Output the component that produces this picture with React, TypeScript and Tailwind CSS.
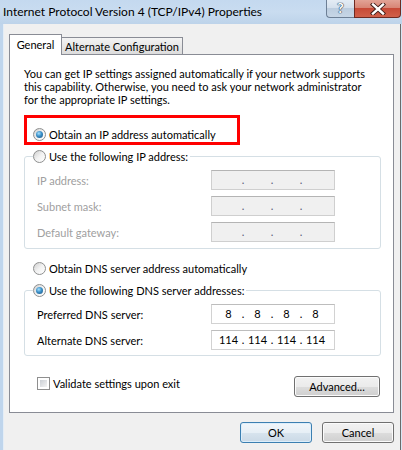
import React from "react";

const font = "font-['Lato','Liberation_Sans',Arial,sans-serif] text-[11px]";

function Radio({ checked }: { checked?: boolean }) {
  return (
    <span className="flex h-[13px] w-[13px] shrink-0 items-center justify-center rounded-full border border-[#8e8f8f] bg-linear-to-br from-[#cfcfcf] via-[#f2f2f2] to-white">
      {checked && (
        <span className="h-[7px] w-[7px] rounded-full bg-[radial-gradient(circle_at_40%_35%,#a6e1ff,#3a8fc7_45%,#1b4f7c)]" />
      )}
    </span>
  );
}

function RadioRow({ label, checked }: { label: string; checked?: boolean }) {
  return (
    <span className="flex h-[15px] items-center gap-[3px] leading-[15px]">
      <Radio checked={checked} />
      <span>{label}</span>
    </span>
  );
}

function IpField({ values, disabled }: { values?: string[]; disabled?: boolean }) {
  const parts = values ?? ["", "", "", ""];
  return (
    <div
      className={`flex h-[20px] w-[124px] items-center border pl-[5px] leading-[18px] ${
        disabled
          ? "border-[#cfcfcf] border-t-[#b4b4b4] bg-[#f0f0f0] text-[#5a5a78]"
          : "border-[#d2d2d2] border-t-[#bdbdbd] bg-white text-black"
      }`}
    >
      {parts.map((p, i) => (
        <React.Fragment key={i}>
          <span className="w-[23px] text-center">{p}</span>
          {i < 3 && <span className="w-[6px] text-center">.</span>}
        </React.Fragment>
      ))}
    </div>
  );
}

function Button({ children, primary, className = "" }: { children: React.ReactNode; primary?: boolean; className?: string }) {
  return (
    <button
      className={`flex h-[21px] items-center justify-center rounded-[3px] border leading-[15px] text-black ${
        primary
          ? "border-[#3c7fb1] bg-[linear-gradient(#f1f6fa,#e7eff6_50%,#d8e4ee_50%,#cad9e6)] shadow-[inset_0_0_0_1px_#dceefb]"
          : "border-[#707070] bg-[linear-gradient(#f2f2f2,#ebebeb_50%,#dddddd_50%,#cfcfcf)] shadow-[inset_0_0_0_1px_#fbfbfb]"
      } ${className}`}
    >
      {children}
    </button>
  );
}

export default function App() {
  return (
    <div className={`flex h-[450px] w-[402px] flex-col overflow-hidden whitespace-nowrap bg-[#f0f0f0] ${font} text-black`}>
      {/* title bar */}
      <div className="flex h-[24px] shrink-0 items-start justify-between bg-linear-to-b from-[#c4d9ef] via-[#c9dcf0] to-[#bdd3ea]">
        <div className="pl-[3px] pt-[4px] text-[12px] leading-[15px] text-black">
          Internet Protocol Version 4 (TCP/IPv4) Properties
        </div>
        <div className="mr-[1px] flex h-[18px]">
          <div className="flex w-[28px] items-center justify-center rounded-bl-[4px] border border-t-0 border-r-0 border-[#6d7f95] bg-[linear-gradient(#e4ecf5,#d3dfec_50%,#bccddf_50%,#c7d6e6)] pb-[1px] text-[14px] font-bold leading-[14px] text-white [text-shadow:0_0_1px_#233a55,0_0_1px_#233a55,0_0_1px_#233a55]">
            ?
          </div>
          <div className="flex w-[47px] items-center justify-center rounded-br-[4px] border border-t-0 border-[#6e2a22] bg-[linear-gradient(#e2a396,#d88676_45%,#c74a37_50%,#d0604a)]">
            <svg width="16" height="12" viewBox="0 0 16 12">
              <path d="M3 1.5 L13 10.5 M13 1.5 L3 10.5" stroke="#3b1a16" strokeWidth="4.2" strokeLinecap="square" />
              <path d="M3 1.5 L13 10.5 M13 1.5 L3 10.5" stroke="#ffffff" strokeWidth="2.4" strokeLinecap="square" />
            </svg>
          </div>
        </div>
      </div>

      <div className="flex flex-1">
        {/* left frame */}
        <div className="w-[3px] bg-[#bfd5ec]" />
        <div className="w-[1px] bg-[#e4edf6]" />

        <div className="flex flex-1 flex-col pl-[5px] pt-[10px]">
          {/* tabs */}
          <div className="flex items-end">
            <div className="relative z-10 -mb-[1px] flex h-[21px] w-[53px] items-start justify-center border border-b-0 border-[#898c95] bg-white pt-[2px] leading-[15px]">
              General
            </div>
            <div className="flex h-[17px] w-[121px] items-center justify-center border border-b-0 border-l-0 border-[#898c95] bg-linear-to-b from-[#f3f3f3] to-[#dcdcdc] leading-[15px]">
              Alternate Configuration
            </div>
          </div>

          {/* panel */}
          <div className="flex h-[359px] w-[385px] flex-col border border-[#898c95] bg-white">
            <p className="ml-[14px] mt-[12px] leading-[13px]">
              You can get IP settings assigned automatically if your network supports
              <br />
              this capability. Otherwise, you need to ask your network administrator
              <br />
              for the appropriate IP settings.
            </p>

            <div className="ml-[14px] mt-[9px] h-[30px] w-[216px] border-[3px] border-[#f00] pl-[6px] pt-[9px]">
              <RadioRow label="Obtain an IP address automatically" checked />
            </div>

            <fieldset className="ml-[14px] mt-[4px] w-[357px] rounded-[3px] border border-[#d5dfe5]">
              <legend className="ml-[8px] pr-[2px]">
                <RadioRow label="Use the following IP address:" />
              </legend>
              <div className="flex flex-col gap-[6px] pb-[6px] pl-[12px] pt-[6px] text-[#a0a0a0]">
                {["IP address:", "Subnet mask:", "Default gateway:"].map((l) => (
                  <div key={l} className="flex items-center">
                    <span className="w-[174px] leading-[15px]">{l}</span>
                    <IpField disabled />
                  </div>
                ))}
              </div>
            </fieldset>

            <div className="ml-[23px] mt-[12px]">
              <RadioRow label="Obtain DNS server address automatically" />
            </div>

            <fieldset className="ml-[14px] mt-[7px] w-[357px] rounded-[3px] border border-[#d5dfe5]">
              <legend className="ml-[8px] pr-[2px]">
                <RadioRow label="Use the following DNS server addresses:" checked />
              </legend>
              <div className="flex flex-col gap-[6px] pb-[5px] pl-[12px] pt-[6px]">
                <div className="flex items-center">
                  <span className="w-[174px] leading-[15px]">Preferred DNS server:</span>
                  <IpField values={["8", "8", "8", "8"]} />
                </div>
                <div className="flex items-center">
                  <span className="w-[174px] leading-[15px]">Alternate DNS server:</span>
                  <IpField values={["114", "114", "114", "114"]} />
                </div>
              </div>
            </fieldset>

            <div className="ml-[27px] mr-[13px] flex items-start justify-between">
              <label className="mt-[20px] flex h-[15px] items-center gap-[3px] leading-[15px]">
                <span className="h-[13px] w-[13px] border border-[#8f8f8f] bg-white p-[2px]">
                  <span className="block h-full w-full bg-linear-to-br from-[#cbcfd5] to-[#f4f4f4]" />
                </span>
                <span>Validate settings upon exit</span>
              </label>
              <Button className="mt-[20px] w-[86px]">Advanced...</Button>
            </div>
          </div>

          {/* bottom buttons */}
          <div className="mt-[9px] flex justify-end gap-[10px] pr-[6px]">
            <Button primary className="w-[72px]">OK</Button>
            <Button className="w-[72px]">Cancel</Button>
          </div>
        </div>

        {/* right frame */}
        <div className="w-[1px] bg-[#6a6a6a]" />
        <div className="w-[1px] bg-[#d8e6f4]" />
      </div>
    </div>
  );
}
